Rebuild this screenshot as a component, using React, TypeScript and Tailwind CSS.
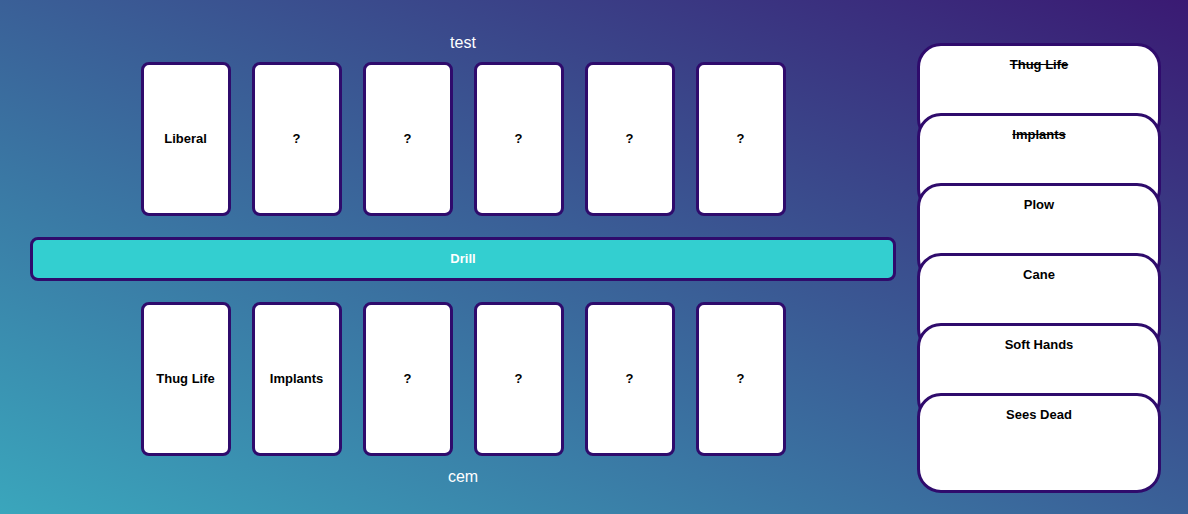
const topCards = ['Liberal', '?', '?', '?', '?', '?']
const bottomCards = ['Thug Life', 'Implants', '?', '?', '?', '?']
const hand = [
  { name: 'Thug Life', used: true },
  { name: 'Implants', used: true },
  { name: 'Plow', used: false },
  { name: 'Cane', used: false },
  { name: 'Soft Hands', used: false },
  { name: 'Sees Dead', used: false },
]

function Card({ label }: { label: string }) {
  return (
    <div className="flex h-[154px] w-[90px] items-center justify-center rounded-lg border-[3px] border-[#2f0b6c] bg-white text-[13px] font-bold text-black">
      {label}
    </div>
  )
}

export default function App() {
  return (
    <div
      className="flex h-[514px] w-[1188px] overflow-hidden bg-linear-to-tr/srgb from-[#3aa6bc] to-[#3a1a73] text-white"
      style={{ fontFamily: '"Liberation Sans", Arial, sans-serif' }}
    >
      <section className="flex w-[896px] flex-col items-center pl-[30px] pt-[30px]">
        <p className="h-6 pt-px text-base leading-6">test</p>
        <div className="mt-2 flex gap-[21px]">
          {topCards.map((c, i) => (
            <Card key={i} label={c} />
          ))}
        </div>
        <button className="mt-[21px] h-[44px] w-full rounded-lg border-[3px] border-[#2f0b6c] bg-[#33cfd0] text-[13px] font-bold text-white">
          Drill
        </button>
        <div className="mt-[21px] flex gap-[21px]">
          {bottomCards.map((c, i) => (
            <Card key={i} label={c} />
          ))}
        </div>
        <p className="mt-2 h-6 pt-px text-base leading-6">cem</p>
      </section>

      <aside className="ml-[21px] flex w-[244px] flex-col pt-[43px]">
        {hand.map((h, i) => (
          <div
            key={h.name}
            className={
              'relative h-[100px] rounded-3xl border-[3px] border-[#2f0b6c] bg-white pt-[11px] text-center text-[13px] font-bold leading-[15px] text-black' +
              (i > 0 ? ' -mt-[30px]' : '')
            }
          >
            <span className={h.used ? 'line-through' : ''}>{h.name}</span>
          </div>
        ))}
      </aside>
    </div>
  )
}
